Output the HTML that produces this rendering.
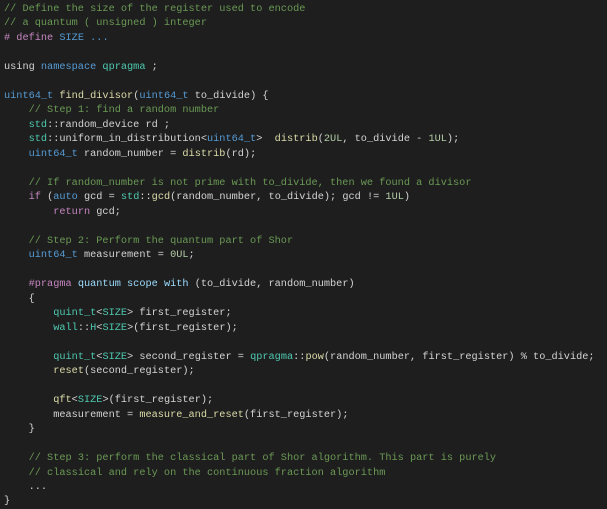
<!DOCTYPE html><html><head><style>
html,body{margin:0;padding:0;background:#1e1e1e;width:607px;height:503px;overflow:hidden}
pre{margin:0;position:absolute;left:4px;top:2px;font-family:"Liberation Mono",monospace;font-size:10.25px;line-height:14.48px;color:#d4d4d4;white-space:pre}
.c{color:#6a9955}.k{color:#569cd6}.t{color:#4ec9b0}.f{color:#dcdcaa}.p{color:#c586c0}.n{color:#b5cea8}.v{color:#9cdcfe}
</style></head><body><pre><span class="c">// Define the size of the register used to encode</span>
<span class="c">// a quantum ( unsigned ) integer</span>
<span class="p"># define</span> <span class="k">SIZE</span> <span class="k">...</span>

using <span class="k">namespace</span> <span class="t">qpragma</span> ;

<span class="k">uint64_t</span> <span class="f">find_divisor</span>(<span class="k">uint64_t</span> to_divide) {
    <span class="c">// Step 1: find a random number</span>
    <span class="t">std</span>::random_device rd ;
    <span class="t">std</span>::uniform_in_distribution&lt;<span class="k">uint64_t</span>&gt;  <span class="f">distrib</span>(<span class="n">2UL</span>, to_divide - <span class="n">1UL</span>);
    <span class="k">uint64_t</span> random_number = <span class="f">distrib</span>(rd);

    <span class="c">// If random_number is not prime with to_divide, then we found a divisor</span>
    <span class="p">if</span> (<span class="k">auto</span> gcd = <span class="t">std</span>::<span class="f">gcd</span>(random_number, to_divide); gcd != <span class="n">1UL</span>)
        <span class="p">return</span> gcd;

    <span class="c">// Step 2: Perform the quantum part of Shor</span>
    <span class="k">uint64_t</span> measurement = <span class="n">0UL</span>;

    <span class="p">#pragma</span> <span class="v">quantum scope with</span> (to_divide, random_number)
    {
        <span class="t">quint_t</span>&lt;<span class="t">SIZE</span>&gt; first_register;
        <span class="t">wall</span>::<span class="t">H</span>&lt;<span class="t">SIZE</span>&gt;(first_register);

        <span class="t">quint_t</span>&lt;<span class="t">SIZE</span>&gt; second_register = <span class="t">qpragma</span>::<span class="f">pow</span>(random_number, first_register) % to_divide;
        <span class="f">reset</span>(second_register);

        <span class="f">qft</span>&lt;<span class="t">SIZE</span>&gt;(first_register);
        measurement = <span class="f">measure_and_reset</span>(first_register);
    }

    <span class="c">// Step 3: perform the classical part of Shor algorithm. This part is purely</span>
    <span class="c">// classical and rely on the continuous fraction algorithm</span>
    ...
}</pre></body></html>
